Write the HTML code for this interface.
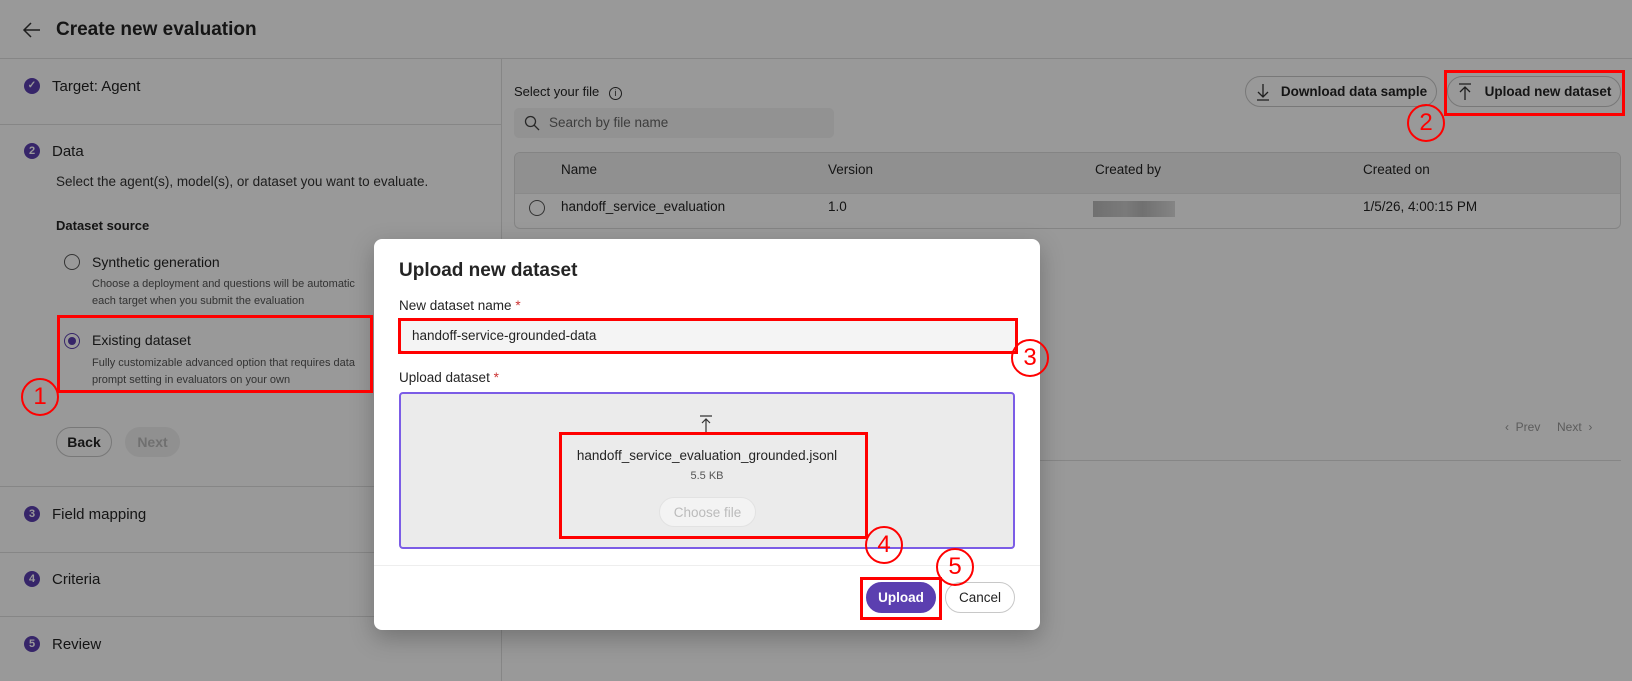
<!DOCTYPE html>
<html><head><meta charset="utf-8">
<style>
*{box-sizing:border-box;margin:0;padding:0}
body{width:1632px;height:681px;overflow:hidden;background:#fff;font-family:"Liberation Sans",sans-serif;color:#242424;position:relative}
.a{position:absolute;white-space:nowrap}
.hl{position:absolute;height:1px;background:#e0e0e0}
.num{position:absolute;width:16px;height:16px;border-radius:50%;background:#5b3fb0;color:#fff;font-size:11px;text-align:center;line-height:16px;font-weight:bold}
.radio{position:absolute;width:16px;height:16px;border-radius:50%;border:1.5px solid #555}
.btn{position:absolute;border:1px solid #c8c8c8;border-radius:16px;font-size:14px;font-weight:bold;display:flex;align-items:center;justify-content:center;background:#fff}
.ov{position:absolute;left:0;top:0;width:1632px;height:681px;background:rgba(0,0,0,0.4)}
.red{position:absolute;border:3px solid #f00}
.circ{position:absolute;width:38px;height:38px;border:2px solid #f00;border-radius:50%;color:#f00;font-size:24px;text-align:center;line-height:34px}
</style></head><body>
<svg class="a" style="left:22px;top:21px" width="20" height="18" viewBox="0 0 20 18"><path d="M18 9H3M9 2L2 9l7 7" stroke="#333" stroke-width="1.5" fill="none"/></svg>
<div class="a" style="left:56px;top:19px;font-size:19px;font-weight:bold">Create new evaluation</div>
<div class="hl" style="left:0;top:58px;width:1632px"></div>
<div class="a" style="left:501px;top:58px;width:1px;height:623px;background:#e0e0e0"></div>
<div class="num" style="left:24px;top:78px;font-size:10px">✓</div>
<div class="a" style="left:52px;top:78px;font-size:15px">Target: Agent</div>
<div class="hl" style="left:0;top:124px;width:501px"></div>
<div class="num" style="left:24px;top:143px">2</div>
<div class="a" style="left:52px;top:143px;font-size:15px">Data</div>
<div class="a" style="left:56px;top:174px;font-size:13.5px;color:#333">Select the agent(s), model(s), or dataset you want to evaluate.</div>
<div class="a" style="left:56px;top:218px;font-size:13px;font-weight:bold">Dataset source</div>
<div class="radio" style="left:64px;top:254px"></div>
<div class="a" style="left:92px;top:254px;font-size:14px">Synthetic generation</div>
<div class="a" style="left:92px;top:276px;font-size:11px;color:#555;line-height:17px">Choose a deployment and questions will be automatic<br>each target when you submit the evaluation</div>
<div class="radio" style="left:64px;top:333px;border-color:#5b3fb0"><div style="margin:2.5px;width:8px;height:8px;border-radius:50%;background:#5b3fb0"></div></div>
<div class="a" style="left:92px;top:332px;font-size:14px">Existing dataset</div>
<div class="a" style="left:92px;top:355px;font-size:11px;color:#555;line-height:17px">Fully customizable advanced option that requires data<br>prompt setting in evaluators on your own</div>
<div class="btn" style="left:56px;top:427px;width:56px;height:30px">Back</div>
<div class="btn" style="left:125px;top:427px;width:55px;height:30px;background:#f0f0f0;border-color:#f0f0f0;color:#bbb">Next</div>
<div class="hl" style="left:0;top:486px;width:501px"></div>
<div class="num" style="left:24px;top:506px">3</div>
<div class="a" style="left:52px;top:506px;font-size:15px">Field mapping</div>
<div class="hl" style="left:0;top:552px;width:501px"></div>
<div class="num" style="left:24px;top:571px">4</div>
<div class="a" style="left:52px;top:571px;font-size:15px">Criteria</div>
<div class="hl" style="left:0;top:616px;width:501px"></div>
<div class="num" style="left:24px;top:636px">5</div>
<div class="a" style="left:52px;top:636px;font-size:15px">Review</div>
<div class="a" style="left:514px;top:84px;font-size:13px">Select your file <span style="display:inline-block;width:13px;height:13px;border:1px solid #333;border-radius:50%;font-size:9px;text-align:center;line-height:11px;margin-left:6px">i</span></div>
<div class="a" style="left:514px;top:108px;width:320px;height:30px;background:#f3f3f3;border-radius:5px"></div>
<svg class="a" style="left:524px;top:115px" width="16" height="16"><circle cx="6.5" cy="6.5" r="5" stroke="#444" stroke-width="1.3" fill="none"/><path d="M10 10l5 5" stroke="#444" stroke-width="1.3"/></svg>
<div class="a" style="left:549px;top:115px;font-size:13.5px;color:#666">Search by file name</div>
<div class="btn" style="left:1245px;top:76px;width:192px;height:31px;font-size:13.5px"><svg width="16" height="18" style="margin-right:10px"><path d="M8 1v13M3 9l5 5 5-5M2 17h12" stroke="#333" stroke-width="1.3" fill="none"/></svg>Download data sample</div>
<div class="btn" style="left:1447px;top:76px;width:174px;height:31px;font-size:13.5px"><svg width="16" height="18" style="margin-right:12px"><path d="M2 1h12M8 17V4M3 9l5-5 5 5" stroke="#333" stroke-width="1.3" fill="none"/></svg>Upload new dataset</div>
<div class="a" style="left:514px;top:152px;width:1107px;height:77px;border:1px solid #ddd;border-radius:6px;overflow:hidden">
 <div style="height:41px;background:#f0f0f0;border-bottom:1px solid #e6e6e6"></div>
</div>
<div class="a" style="left:561px;top:162px;font-size:13.5px">Name</div>
<div class="a" style="left:828px;top:162px;font-size:13.5px">Version</div>
<div class="a" style="left:1095px;top:162px;font-size:13.5px">Created by</div>
<div class="a" style="left:1363px;top:162px;font-size:13.5px">Created on</div>
<div class="radio" style="left:529px;top:200px"></div>
<div class="a" style="left:561px;top:199px;font-size:13.5px">handoff_service_evaluation</div>
<div class="a" style="left:828px;top:199px;font-size:13.5px">1.0</div>
<div class="a" style="left:1093px;top:201px;width:82px;height:16px;background:linear-gradient(90deg,#bbb,#ccc 40%,#bbb 60%,#ddd)"></div>
<div class="a" style="left:1363px;top:199px;font-size:13.5px">1/5/26, 4:00:15 PM</div>
<div class="a" style="left:1505px;top:420px;font-size:12px;color:#999">‹&nbsp;&nbsp;Prev&nbsp;&nbsp;&nbsp;&nbsp;&nbsp;Next&nbsp;&nbsp;›</div>
<div class="hl" style="left:1040px;top:460px;width:581px"></div>
<div class="ov"></div>
<div class="a" style="left:374px;top:239px;width:666px;height:391px;background:#fff;border-radius:8px;box-shadow:0 8px 24px rgba(0,0,0,.25)">
 <div class="a" style="left:25px;top:21px;font-size:19px;font-weight:bold">Upload new dataset</div>
 <div class="a" style="left:25px;top:59px;font-size:13.5px">New dataset name <span style="color:#c33">*</span></div>
 <div class="a" style="left:25px;top:81px;width:616px;height:32px;background:#f4f4f4;border-bottom:1px solid #888;border-radius:4px"></div>
 <div class="a" style="left:38px;top:89px;font-size:13.5px">handoff-service-grounded-data</div>
 <div class="a" style="left:25px;top:131px;font-size:13.5px">Upload dataset <span style="color:#c33">*</span></div>
 <div class="a" style="left:25px;top:153px;width:616px;height:157px;background:#ebebeb;border:2px solid #7b5ce6;border-radius:4px"></div>
 <svg class="a" style="left:325px;top:176px" width="14" height="18"><path d="M1 1h12M7 17V4M3 8l4-4 4 4" stroke="#333" stroke-width="1.2" fill="none"/></svg>
 <div class="a" style="left:25px;top:209px;width:616px;text-align:center;font-size:13.5px">handoff_service_evaluation_grounded.jsonl</div>
 <div class="a" style="left:25px;top:231px;width:616px;text-align:center;font-size:11px;color:#555">5.5 KB</div>
 <div class="btn" style="left:285px;top:258px;width:97px;height:30px;background:#f3f3f3;border-color:#e2e2e2;color:#bbb;font-weight:normal;font-size:13.5px">Choose file</div>
 <div class="hl" style="left:0;top:326px;width:666px;background:#eee"></div>
 <div class="btn" style="left:492px;top:343px;width:70px;height:31px;background:#5b3fb0;border-color:#5b3fb0;color:#fff;font-size:13.5px">Upload</div>
 <div class="btn" style="left:571px;top:343px;width:70px;height:31px;font-size:13.5px;font-weight:normal">Cancel</div>
</div>
<div class="red" style="left:57px;top:315px;width:316px;height:78px"></div>
<div class="circ" style="left:21px;top:378px">1</div>
<div class="red" style="left:1444px;top:70px;width:181px;height:46px"></div>
<div class="circ" style="left:1407px;top:104px">2</div>
<div class="red" style="left:398px;top:318px;width:620px;height:36px"></div>
<div class="circ" style="left:1011px;top:339px">3</div>
<div class="red" style="left:559px;top:432px;width:309px;height:107px"></div>
<div class="circ" style="left:865px;top:526px">4</div>
<div class="red" style="left:860px;top:577px;width:82px;height:43px"></div>
<div class="circ" style="left:936px;top:548px">5</div>
</body></html>
